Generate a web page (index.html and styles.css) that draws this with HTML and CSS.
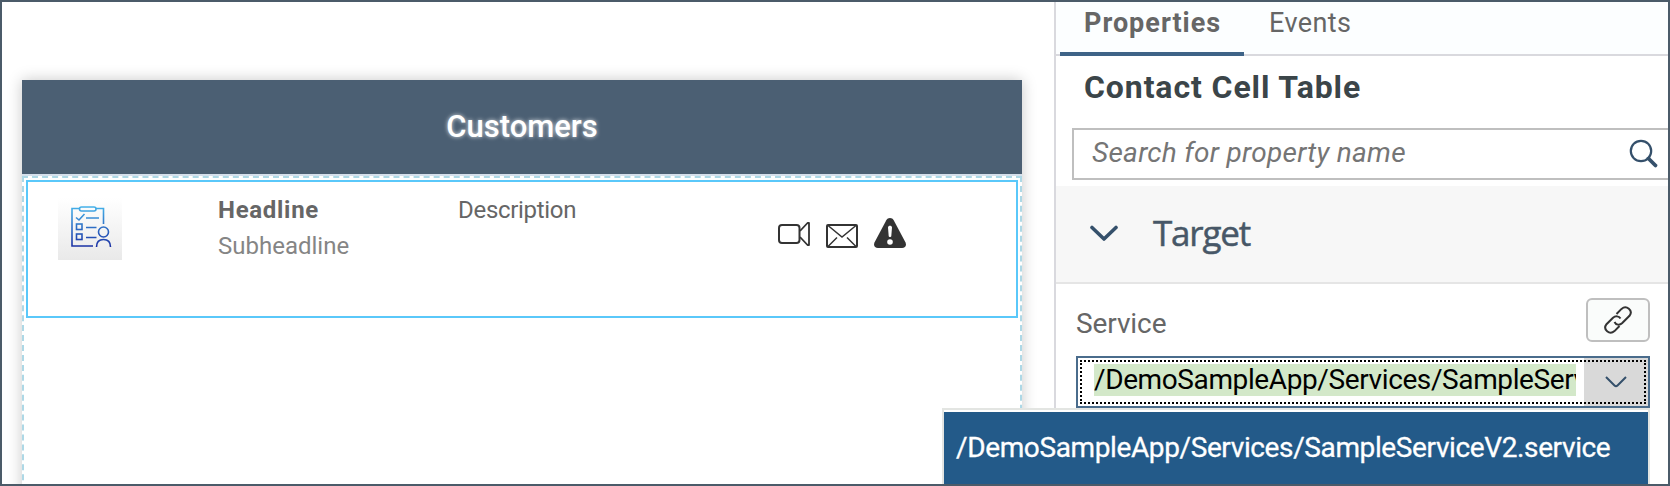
FILE: index.html
```html
<!DOCTYPE html>
<html lang="en">
<head>
<meta charset="utf-8">
<title>Contact Cell Table</title>
<link rel="stylesheet" href="styles.css">
</head>
<body>
<div class="window">
  <main class="canvas">
    <section class="card">
      <header class="card-header"><span class="card-title">Customers</span></header>
      <div class="drop-zone">
        <div class="contact-cell">
          <svg class="avatar" width="64" height="62" viewBox="0 0 64 62" fill="none">
            <defs>
              <linearGradient id="bg" x1="0" y1="0" x2="0" y2="1"><stop offset="0" stop-color="#fff"/><stop offset="1" stop-color="#e9e9e9"/></linearGradient>
              <linearGradient id="ink" gradientUnits="userSpaceOnUse" x1="0" y1="8" x2="0" y2="49"><stop offset="0" stop-color="#45b3ea"/><stop offset="1" stop-color="#1a2fa3"/></linearGradient>
            </defs>
            <rect width="64" height="62" fill="url(#bg)"/>
            <g stroke="url(#ink)" stroke-width="1.6">
              <path d="M22 10.500H14V48H35M38 10.500H45.500V26"/>
              <rect x="21.500" y="9" width="16.500" height="4" rx="2"/>
              <path d="M18 19.500L21 22L26.500 16M28 20.010L41 20M28 29.510L38.500 29.500M28 39.510L38.500 39.500"/>
              <rect x="18.500" y="26" width="5.500" height="5.500"/>
              <rect x="18.500" y="36" width="5.500" height="5.500"/>
              <circle cx="45.500" cy="34" r="5"/>
              <path d="M38.500 49C38.500 44 41 41.500 45.500 41.500S52.500 44 52.500 49"/>
            </g>
          </svg>
          <div class="names">
            <div class="headline">Headline</div>
            <div class="subheadline">Subheadline</div>
          </div>
          <div class="description">Description</div>
          <div class="actions">
            <svg width="32" height="32" viewBox="0 0 32 32" fill="none" stroke="#333" stroke-width="2" stroke-linejoin="round">
              <rect x="1" y="7" width="20.500" height="18" rx="3"/>
              <path d="M22 13L29.500 5H31V27H29.500L22 19" stroke-width="1.800"/>
            </svg>
            <svg width="32" height="32" viewBox="0 0 32 32" fill="none" stroke="#333" stroke-width="2">
              <rect x="1" y="7" width="30" height="22" rx="1"/>
              <path d="M2 7.500L16 19L30 7.500M2 28.500L11 19.500M30 28.500L21 19.500" stroke-width="1.500"/>
            </svg>
            <svg width="32" height="32" viewBox="0 0 32 32">
              <path d="M16 0C17.600 0 18.900.9 19.700 2.300L31.400 24.200C32.900 27.200 31.300 30 28 30H4C.7 30-.9 27.200.6 24.200L12.300 2.300C13.100.9 14.400 0 16 0Z" fill="#333"/>
              <path d="M14 9.500C14 7.200 18 7.200 18 9.500L17.300 18C17.200 19.300 14.800 19.300 14.700 18Z" fill="#fff"/>
              <circle cx="16" cy="24" r="2.800" fill="#fff"/>
            </svg>
          </div>
        </div>
      </div>
    </section>
  </main>
  <aside class="panel">
    <nav class="tabs">
      <div class="tab tab-active">Properties</div>
      <div class="tab">Events</div>
    </nav>
    <h2 class="panel-title">Contact Cell Table</h2>
    <div class="search">
      <span class="search-text">Search for property name</span>
      <svg width="30" height="30" viewBox="0 0 30 30" fill="none" stroke="#35506b">
        <circle cx="12" cy="12" r="10.200" stroke-width="2.200"/>
        <path d="M19.500 19.500L26.500 26.500" stroke-width="3.800" stroke-linecap="round"/>
      </svg>
    </div>
    <div class="group">
      <svg width="28" height="18" viewBox="0 0 28 18" fill="none" stroke="#35506b" stroke-width="3.600" stroke-linecap="round" stroke-linejoin="round"><path d="M2 2.500L14 14L26 2.500"/></svg>
      <span class="group-title">Target</span>
    </div>
    <div class="field">
      <div class="field-head">
        <span class="label">Service</span>
        <div class="link-button">
          <svg width="28" height="28" viewBox="0 0 28 28" fill="none" stroke="#333" stroke-width="2">
            <path d="M12.500 8L17.500 2.900C22.500-1.300 29.500 4.500 25.500 9.800L18 17.300C15.500 19.600 12 19 10.500 16"/>
            <path d="M15.500 20L10.500 25.100C5.500 29.300-1.500 23.500 2.500 18.200L9 11.700C11.500 9.600 15 10 16.500 12.500"/>
          </svg>
        </div>
      </div>
      <div class="combo">
        <div class="combo-value">/DemoSampleApp/Services/SampleServiceV2.service</div>
        <div class="combo-arrow">
          <svg width="22" height="12" viewBox="0 0 22 12" fill="none" stroke="#35506b" stroke-width="2"><path d="M1 1L9.500 9.500Q11 11 12.500 9.500L21 1"/></svg>
        </div>
        <div class="combo-focus"></div>
        <div class="menu"><div class="menu-item">/DemoSampleApp/Services/SampleServiceV2.service</div></div>
      </div>
    </div>
  </aside>
</div>
</body>
</html>
```
FILE: styles.css
```css
* { box-sizing: border-box; }
body { margin: 0; font-family: Roboto, "Liberation Sans", sans-serif; background: #fff; }
svg { display: block; flex: none; }
.window {
  width: 1670px; height: 486px; display: flex;
  border: 2px solid #4b5b69; overflow: hidden;
}
.canvas { width: 1052px; padding: 78px 32px 0 20px; flex: none; }
.card { height: 440px; display: flex; flex-direction: column; box-shadow: 0 0 14px rgba(0, 0, 0, .22); background: #fff; }
.card-header {
  height: 96px; flex: none; background: #4b5f73; border-bottom: 2px solid #d5e0ec;
  text-align: center; line-height: 94px;
}
.card-title {
  font-size: 31px; font-weight: 500; letter-spacing: 0; color: #fff;
  text-shadow: 0 0 4px rgba(255, 255, 255, .8);
}
.drop-zone { flex: 1; border: 2px dashed #add8e6; padding: 2px; }
.contact-cell {
  height: 138px; border: 2px solid #5ac8fa; padding: 12px 0 0 30px;
  display: flex; align-items: flex-start; color: #666;
}
.avatar { margin-top: 4px; }
.names { width: 240px; margin: -2px 0 0 96px; }
.headline, .subheadline, .description { font-size: 24px; line-height: 36px; }
.headline { font-weight: 700; letter-spacing: .7px; }
.subheadline { color: #858585; }
.description { width: 320px; margin-top: -2px; letter-spacing: -.3px; }
.actions { display: flex; gap: 16px; margin-top: 24px; }
.panel { flex: 1; min-width: 0; border-left: 2px solid #d9d9de; }
.tabs {
  height: 54px; padding-left: 4px; display: flex;
  background: #fcfeff; border-bottom: 2px solid #d9d9de;
}
.tab { height: 54px; padding: 0 25px; font-size: 27px; line-height: 42px; letter-spacing: .4px; color: #666; }
.tab-active { width: 184px; padding-left: 24px; font-weight: 700; letter-spacing: 1px; border-bottom: 4px solid #3e6387; white-space: nowrap; }
.panel-title {
  margin: 0; padding-left: 28px; height: 62px; line-height: 62px;
  font-size: 32px; font-weight: 700; letter-spacing: .9px; color: #3b4549;
}
.search {
  height: 52px; margin: 10px 0 6px 16px; padding: 0 9px 0 18px;
  border: 2px solid #bfbfbf; border-right: 0;
  display: flex; align-items: center; justify-content: space-between;
}
.search-text { font-size: 28px; line-height: 44px; padding-bottom: 3px; font-style: italic; letter-spacing: .28px; color: #757575; }
.group {
  height: 98px; padding: 0 0 0 34px; display: flex; align-items: center; gap: 35px;
  background: #f7f7f7; border-bottom: 2px solid #e5e5e5;
}
.group-title { font-family: "Open Sans", sans-serif; font-size: 35px; line-height: 48px; padding-bottom: 3px; letter-spacing: -1.2px; color: #475767; -webkit-text-stroke: .5px #475767; }
.field { padding: 14px 18px 0 20px; }
.field-head { height: 44px; display: flex; justify-content: space-between; align-items: center; }
.label { font-size: 28px; letter-spacing: -.1px; color: #666; padding: 7px 0 0; }
.link-button {
  width: 64px; height: 44px; border: 2px solid #bfbfbf; border-radius: 6px;
  background: #fafcfb; display: grid; place-items: center;
}
.combo { position: relative; height: 52px; margin-top: 14px; border: 2px solid #4a6c8c; display: flex; justify-content: space-between; }
.combo-focus { position: absolute; inset: 2px; border: 2px dotted #000; }
.combo-value {
  width: 482px; height: 32px; margin: 6px 0 0 16px; overflow: hidden;
  background: #d3e8c9; color: #000; font-size: 28px; line-height: 32px; letter-spacing: -.39px; white-space: nowrap;
}
.combo-arrow { width: 64px; background: #d9d9d9; display: grid; place-items: center; }
.menu {
  position: absolute; top: 50px; right: -2px; width: 708px; height: 78px;
  border: 2px solid #e3e5e2; border-bottom: 0; padding-top: 2px; background: #fff;
}
.menu-item {
  height: 74px; padding-left: 12px; background: #235a89; color: #fff;
  font-size: 28px; line-height: 72px; letter-spacing: -.38px; -webkit-text-stroke: .3px #fff; white-space: nowrap;
}
```
